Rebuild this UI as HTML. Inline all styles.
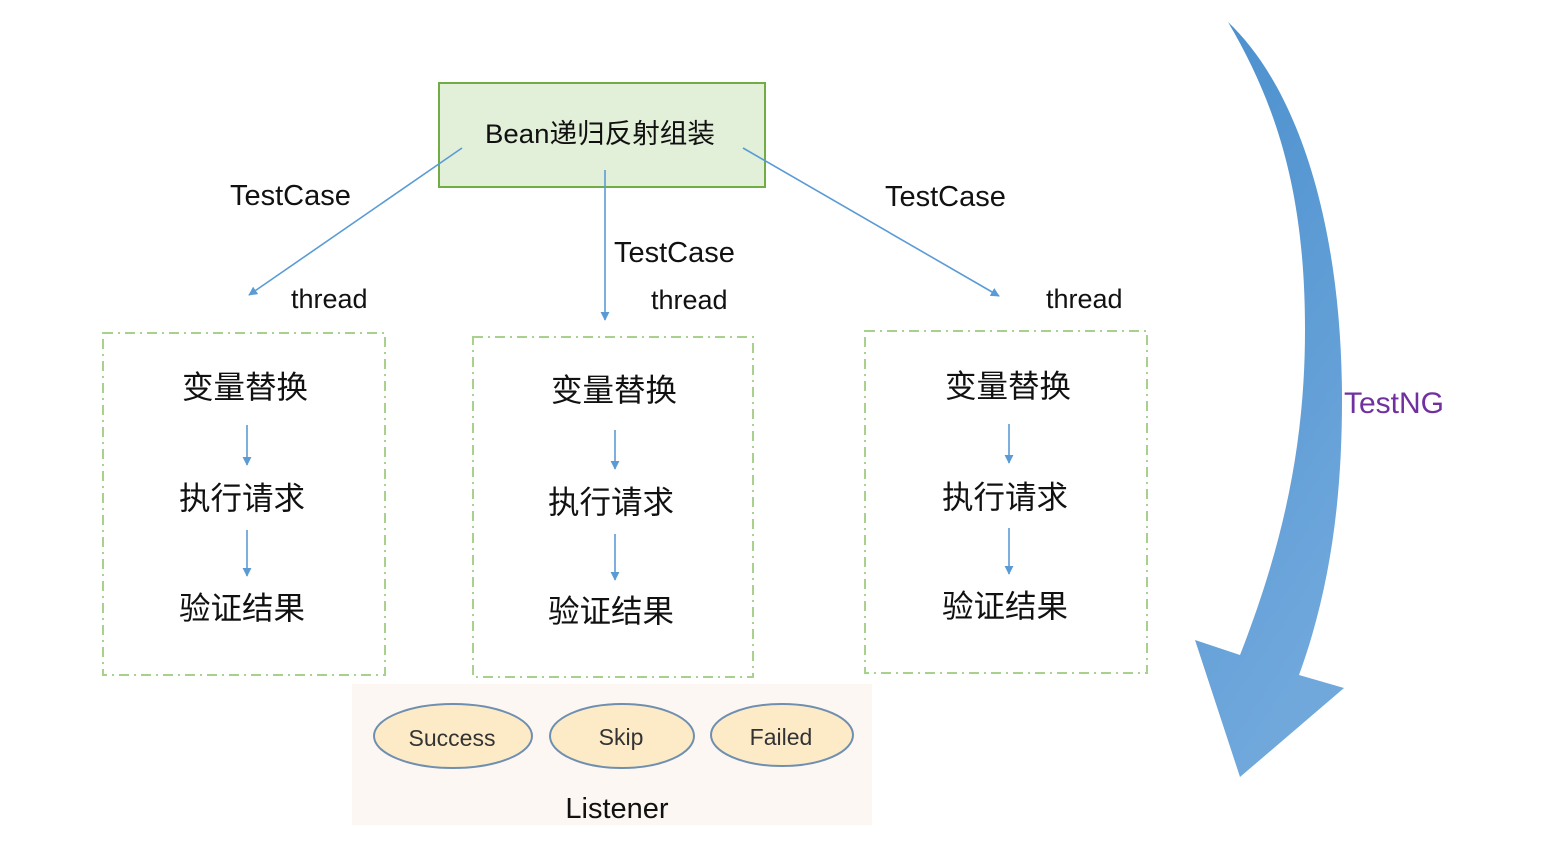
<!DOCTYPE html>
<html><head><meta charset="utf-8"><style>
html,body{margin:0;padding:0;background:#fff;}
svg{display:block;}
text{font-family:"Liberation Sans","Noto Sans CJK SC",sans-serif;}
</style></head><body>
<svg width="1544" height="852" viewBox="0 0 1544 852" xmlns="http://www.w3.org/2000/svg">
<defs>
<marker id="ah" viewBox="0 0 10 10" refX="9" refY="5" markerWidth="9" markerHeight="9" markerUnits="userSpaceOnUse" orient="auto"><path d="M0,0L10,5L0,10z" fill="#5b9bd5"/></marker>
<linearGradient id="g" x1="0" y1="0" x2="0.3" y2="1"><stop offset="0" stop-color="#4a8fcd"/><stop offset="1" stop-color="#70a8dc"/></linearGradient>
</defs>
<rect x="439" y="83" width="326" height="104" fill="#e2efd9" stroke="#70ad47" stroke-width="2"/>
<text x="600" y="143" font-size="27" text-anchor="middle" fill="#111" textLength="230" lengthAdjust="spacingAndGlyphs">Bean递归反射组装</text>
<g stroke="#5b9bd5" stroke-width="1.6" fill="none" marker-end="url(#ah)">
<line x1="462" y1="148" x2="249" y2="295"/>
<line x1="605" y1="170" x2="605" y2="320"/>
<line x1="743" y1="148" x2="999" y2="296"/>
<line x1="247" y1="425" x2="247" y2="465"/>
<line x1="247" y1="530" x2="247" y2="576"/>
<line x1="615" y1="430" x2="615" y2="469"/>
<line x1="615" y1="534" x2="615" y2="580"/>
<line x1="1009" y1="424" x2="1009" y2="463"/>
<line x1="1009" y1="528" x2="1009" y2="574"/>
</g>
<g font-size="29" fill="#111">
<text x="230" y="205">TestCase</text>
<text x="614" y="262">TestCase</text>
<text x="885" y="206">TestCase</text>
</g>
<g font-size="27" fill="#111">
<text x="291" y="308">thread</text>
<text x="651" y="309">thread</text>
<text x="1046" y="308">thread</text>
</g>
<g fill="none" stroke="#a9d18e" stroke-width="2" stroke-dasharray="10,5,2,5">
<rect x="103" y="333" width="282" height="342"/>
<rect x="473" y="337" width="280" height="340"/>
<rect x="865" y="331" width="282" height="342"/>
</g>
<g font-size="31.5" fill="#111" text-anchor="middle">
<text x="245" y="398">变量替换</text>
<text x="242" y="509">执行请求</text>
<text x="242" y="619">验证结果</text>
<text x="614" y="401">变量替换</text>
<text x="611" y="513">执行请求</text>
<text x="611" y="622">验证结果</text>
<text x="1008" y="397">变量替换</text>
<text x="1005" y="508">执行请求</text>
<text x="1005" y="617">验证结果</text>
</g>
<rect x="352" y="684" width="520" height="141" fill="#fcf7f3"/>
<g fill="#fdebc8" stroke="#6f8fb0" stroke-width="2">
<ellipse cx="453" cy="736" rx="79" ry="32"/>
<ellipse cx="622" cy="736" rx="72" ry="32"/>
<ellipse cx="782" cy="735" rx="71" ry="31"/>
</g>
<g font-size="23" fill="#333" text-anchor="middle">
<text x="452" y="746">Success</text>
<text x="621" y="745">Skip</text>
<text x="781" y="745">Failed</text>
</g>
<text x="617" y="818" font-size="29" fill="#111" text-anchor="middle">Listener</text>
<path d="M1228,22 C1300,90 1342,230 1342,400 C1342,500 1330,590 1299,675 L1344,688 L1240,777 L1195,640 L1240,655 C1285,540 1305,440 1305,330 C1305,200 1280,110 1228,22 Z" fill="url(#g)"/>
<text x="1344" y="413" font-size="30" fill="#7030a0">TestNG</text>
</svg>
</body></html>
